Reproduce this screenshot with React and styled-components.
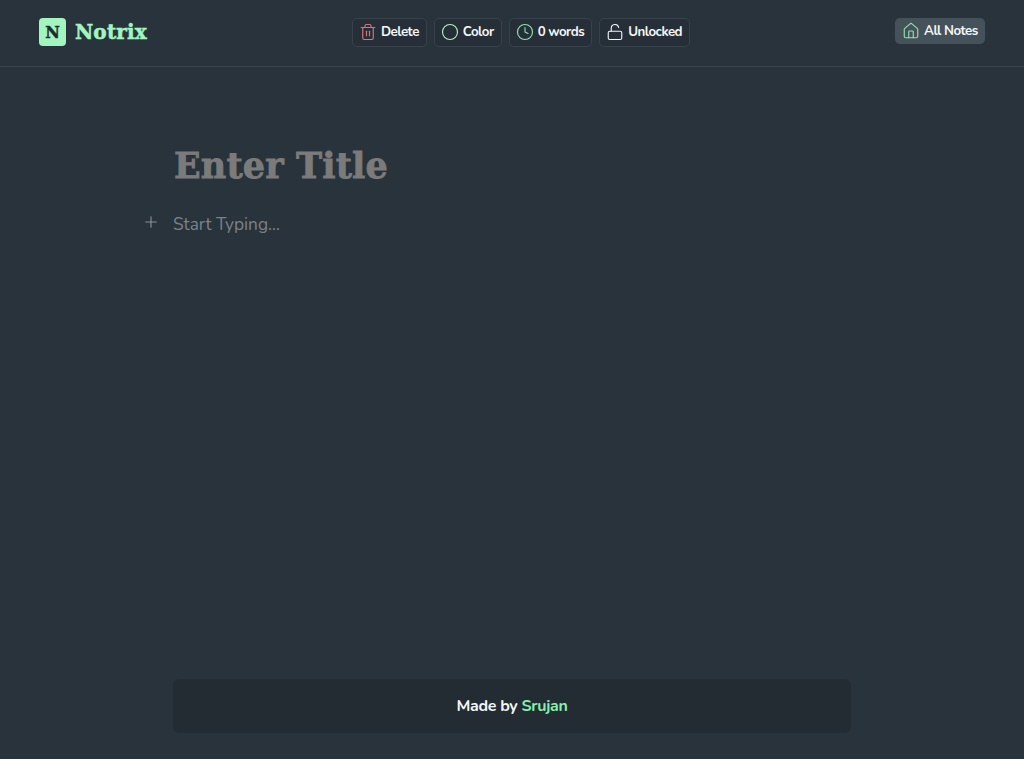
import React from 'react';
import styled, { createGlobalStyle } from 'styled-components';
import { Trash2, Circle, Clock, LockOpen, House, Plus } from 'lucide-react';

const GlobalStyle = createGlobalStyle`
    html, body {
        margin: 0;
        padding: 0;
        background: #29333c;
    }
`;

const App = () => {
    return (
        <Page>
            <GlobalStyle />
            <Header>
                <Brand>
                    <LogoBox>N</LogoBox>
                    <BrandName>Notrix</BrandName>
                </Brand>

                <Toolbar>
                    <ToolButton>
                        <Trash2 size={18} color="#e0737a" strokeWidth={1.5} />
                        Delete
                    </ToolButton>
                    <ToolButton>
                        <Circle size={18} color="#b4f0c4" strokeWidth={1.5} />
                        Color
                    </ToolButton>
                    <ToolButton>
                        <Clock size={18} color="#8fe3ad" strokeWidth={1.5} />
                        0 words
                    </ToolButton>
                    <ToolButton>
                        <LockOpen size={18} color="#f2f4f5" strokeWidth={1.5} />
                        Unlocked
                    </ToolButton>
                </Toolbar>

                <NotesLink>
                    <House size={18} color="#8fe3ad" strokeWidth={1.5} />
                    All Notes
                </NotesLink>
            </Header>

            <Editor>
                <Title>Enter Title</Title>
                <BlockRow>
                    <AddBlock>
                        <Plus size={18} strokeWidth={1.5} />
                    </AddBlock>
                    <Placeholder>Start Typing...</Placeholder>
                </BlockRow>
            </Editor>

            <Footer>
                Made by <Author>Srujan</Author>
            </Footer>
        </Page>
    );
};

const Page = styled.div`
    display: flex;
    flex-direction: column;
    height: 100vh;
    background: #29333c;
    color: #f5f6f7;
    font-family: 'Nunito', 'Open Sans', 'Noto Sans', sans-serif;
    overflow: hidden;
`;

const Header = styled.header`
    display: flex;
    justify-content: space-between;
    align-items: center;
    height: 64px;
    padding: 0 39px 2px;
    border-bottom: 1px solid #3a444c;
    flex-shrink: 0;
`;

const Brand = styled.div`
    display: flex;
    align-items: center;
    gap: 9px;
    width: 108px;
`;

const LogoBox = styled.div`
    display: flex;
    align-items: center;
    justify-content: center;
    width: 28px;
    height: 28px;
    border-radius: 4px;
    background: #a3f5c0;
    color: #1f2a30;
    font-family: 'DejaVu Serif', serif;
    font-weight: 700;
    font-size: 16px;
    -webkit-text-stroke: 0.4px #1f2a30;
`;

const BrandName = styled.div`
    color: #a3f5c0;
    font-family: 'DejaVu Serif', serif;
    font-weight: 700;
    font-size: 20px;
    letter-spacing: 0.2px;
    -webkit-text-stroke: 0.5px #a3f5c0;
`;

const Toolbar = styled.div`
    display: flex;
    align-items: center;
    gap: 7px;
`;

const ToolButton = styled.button`
    display: flex;
    align-items: center;
    gap: 4px;
    height: 29px;
    padding: 0 7px 0 6px;
    background: #262f37;
    border: 1px solid #38424a;
    border-radius: 5px;
    color: #f5f6f7;
    font-family: inherit;
    font-size: 13.3px;
    font-weight: 700;
    letter-spacing: -0.5px;
    white-space: nowrap;
`;

const NotesLink = styled.a`
    display: flex;
    align-items: center;
    gap: 4px;
    height: 26px;
    width: 90px;
    margin-bottom: 2px;
    box-sizing: border-box;
    padding: 0 7px;
    background: #46525a;
    border-radius: 5px;
    color: #f5f6f7;
    font-size: 13.3px;
    font-weight: 700;
    letter-spacing: -0.5px;
    white-space: nowrap;
`;

const Editor = styled.main`
    flex: 1;
    width: 678px;
    margin: 0 auto;
    padding-top: 76px;
`;

const Title = styled.h1`
    margin: 0 0 0 1px;
    color: #7b7b7b;
    font-family: 'DejaVu Serif', serif;
    font-size: 35px;
    font-weight: 700;
    line-height: 46px;
    letter-spacing: 0.15px;
    -webkit-text-stroke: 0.8px #7b7b7b;
`;

const BlockRow = styled.div`
    display: flex;
    align-items: center;
    gap: 13px;
    margin: 23px 0 0 -31px;
    height: 24px;
`;

const AddBlock = styled.span`
    display: flex;
    margin-bottom: 5px;
    color: #8a9298;
`;

const Placeholder = styled.div`
    color: #7a8288;
    font-size: 17.3px;
`;

const Footer = styled.footer`
    display: flex;
    align-items: center;
    justify-content: center;
    gap: 4px;
    flex-shrink: 0;
    width: 678px;
    height: 54px;
    margin: 0 auto 26px;
    background: #232c33;
    border-radius: 6px;
    font-size: 16px;
    font-weight: 700;
    letter-spacing: -0.3px;
`;

const Author = styled.span`
    color: #86efac;
`;

export default App;
